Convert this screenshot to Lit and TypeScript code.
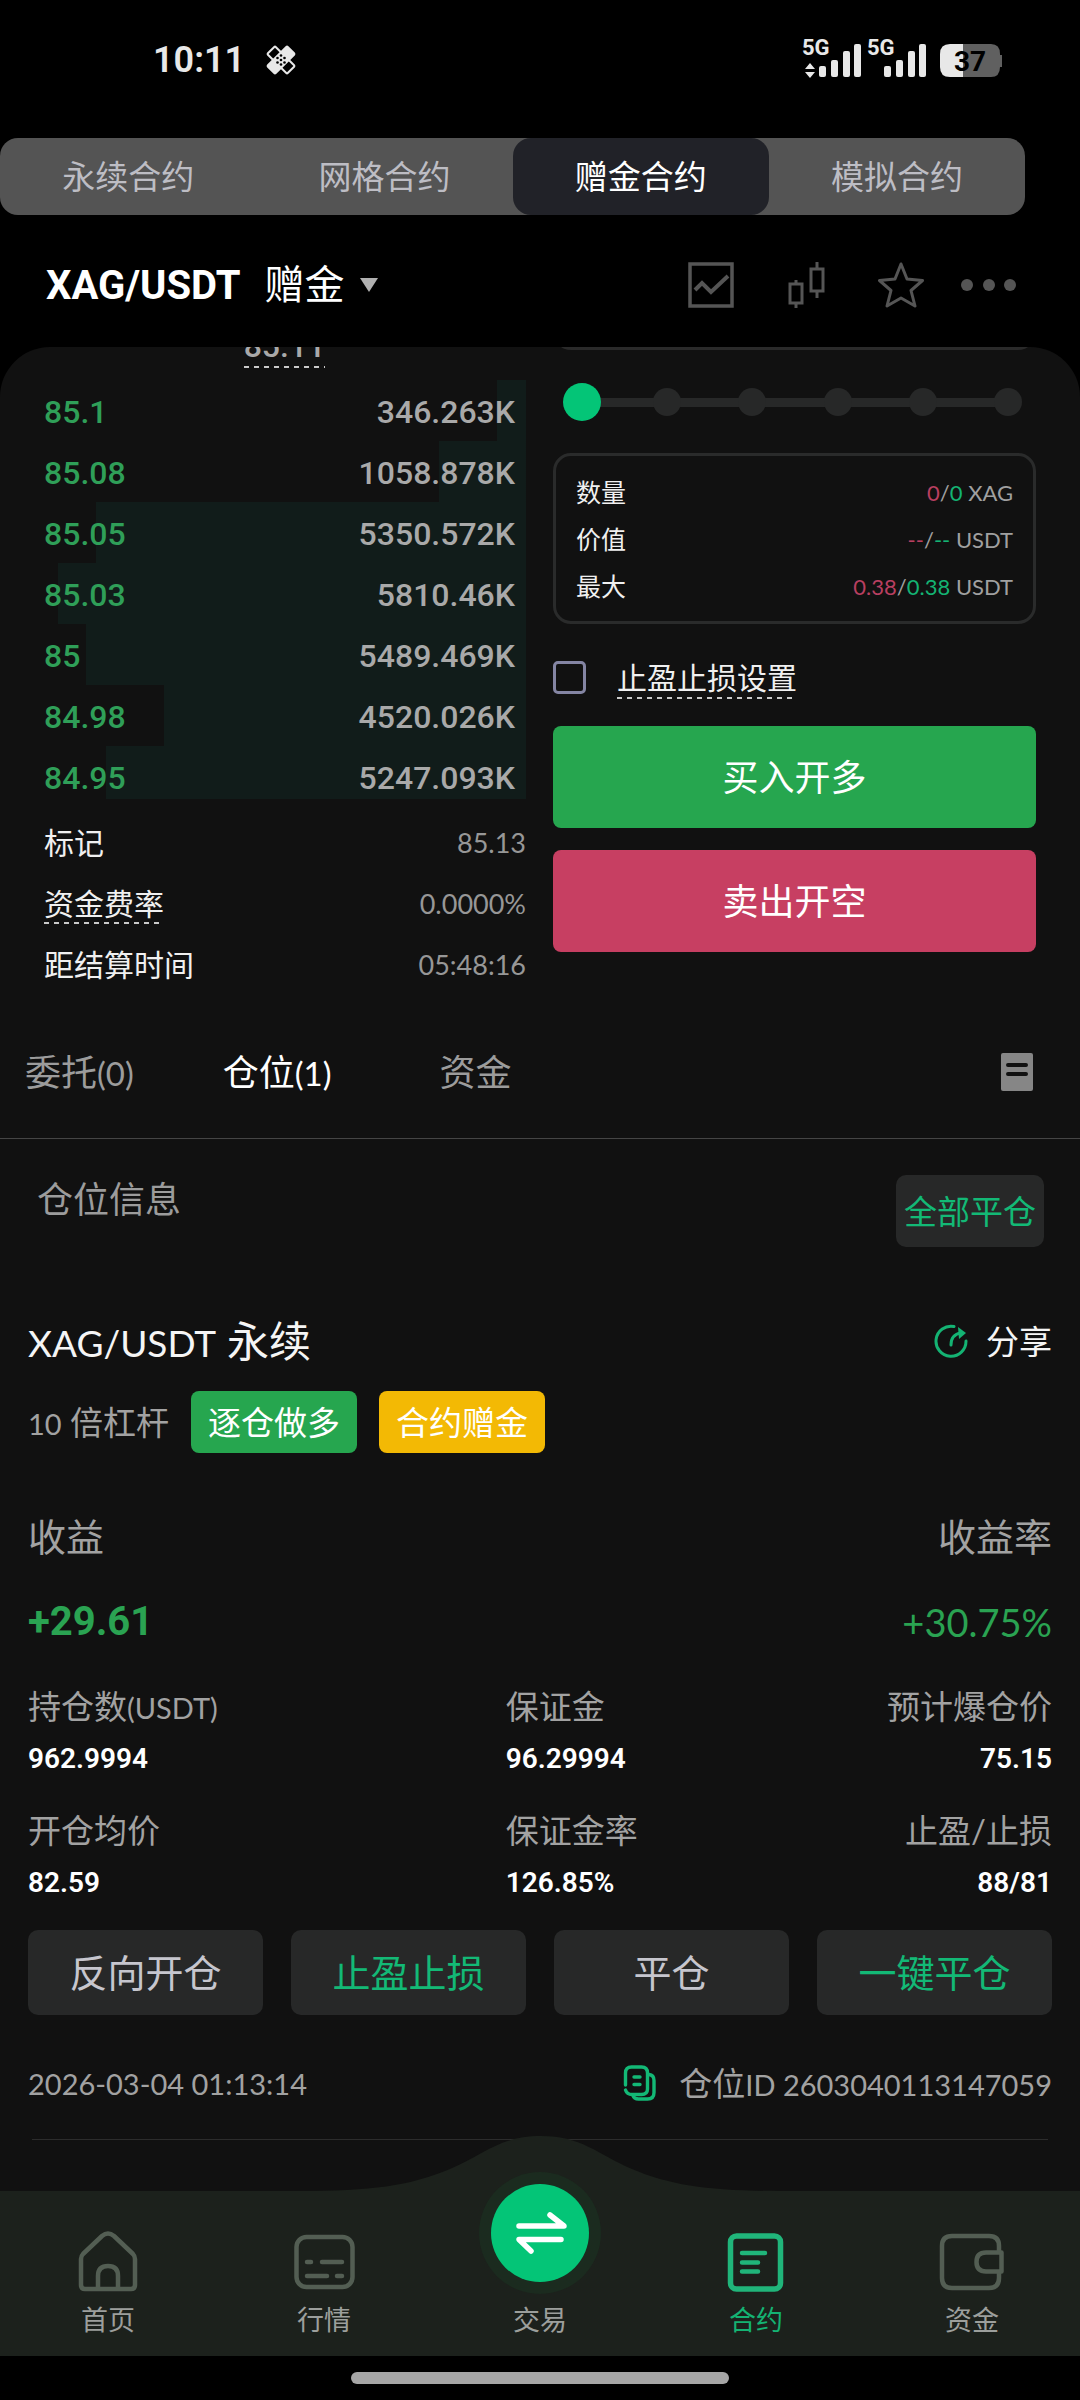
import { LitElement, html, css, svg } from "lit";
import { customElement, state } from "lit/decorators.js";
import { classMap } from "lit/directives/class-map.js";

const base = css`
  * {
    box-sizing: border-box;
  }
  button,
  input {
    font: inherit;
    color: inherit;
    margin: 0;
  }
  button {
    padding: 0;
    border: 0;
    background: none;
    cursor: pointer;
  }
  a {
    color: inherit;
    text-decoration: none;
  }
  svg {
    display: block;
    flex: none;
  }
  dl,
  dd,
  h1,
  h2,
  h3 {
    margin: 0;
    font-weight: 400;
  }
  .n {
    line-height: 1;
  }
  .dashed {
    background: repeating-linear-gradient(90deg, #c9c9c9 0 5px, transparent 5px 10px) bottom left / 100% 2px no-repeat;
  }
`;

@customElement("status-bar")
class StatusBar extends LitElement {
  static styles = [
    base,
    css`
      :host {
        display: flex;
        justify-content: space-between;
        align-items: center;
        height: 80px;
        padding: 0 78px 0 153px;
        color: #e8e8e8;
      }
      .left {
        display: flex;
        align-items: center;
        gap: 20px;
      }
      .time {
        font: 600 36px/48px Roboto, sans-serif;
      }
      .sys {
        display: flex;
        align-items: center;
      }
      text {
        font-family: Roboto, sans-serif;
        font-weight: 700;
      }
    `,
  ];
  render() {
    const bars = (x: number) => svg`
      <rect x=${x} y="27" width="7" height="11" rx="2" />
      <rect x=${x + 12} y="21" width="7" height="17" rx="2" />
      <rect x=${x + 24} y="12" width="7" height="26" rx="2" />
      <rect x=${x + 35} y="5" width="7" height="33" rx="2" />`;
    return html`
      <div class="left">
        <span class="time">10:11</span>
        <svg width="32" height="32" viewBox="0 0 32 32" aria-hidden="true">
          <g stroke="#e8e8e8" stroke-width="2">
            <rect x="10.500" y="2" width="11" height="28" rx="1" fill="none" transform="rotate(-45 16 16)" />
            <rect x="10.500" y="2" width="11" height="28" rx="1" fill="#e8e8e8" transform="rotate(45 16 16)" />
          </g>
          <g fill="#000">
            <circle cx="16" cy="11.500" r="1.300" /><circle cx="12.500" cy="14" r="1.300" /><circle cx="19.500" cy="14" r="1.300" />
            <circle cx="16" cy="16" r="1.300" /><circle cx="12.500" cy="18.500" r="1.300" /><circle cx="19.500" cy="18.500" r="1.300" />
            <circle cx="16" cy="20.500" r="1.300" />
          </g>
        </svg>
      </div>
      <div class="sys">
        <svg width="200" height="58" viewBox="0 -8 200 58" fill="#e8e8e8" role="img" aria-label="5G 5G 37%">
          <text x="0" y="16" font-size="22">5G</text>
          <path d="M8 24l5 6H3zM8 39l5-6H3z" />
          ${bars(17)}
          <text x="65" y="16" font-size="22">5G</text>
          ${bars(82)}
          <path fill="#606060" d="M148 5h41q9 0 9 10v1h3v12h-3q0 10-9 10h-41z" />
          <path d="M148 5h13v33h-13q-10 0-10-10V15q0-10 10-10z" />
          <text x="152" y="32" font-size="28" fill="#000">37</text>
        </svg>
      </div>
    `;
  }
}

const BIDS = [
  ["85.1", "346.263K", 6],
  ["85.08", "1058.878K", 18],
  ["85.05", "5350.572K", 89],
  ["85.03", "5810.46K", 97],
  ["85", "5489.469K", 91],
  ["84.98", "4520.026K", 75],
  ["84.95", "5247.093K", 87],
] as const;

@customElement("order-book")
class OrderBook extends LitElement {
  static styles = [
    base,
    css`
      :host {
        display: block;
      }
      .last {
        display: block;
        width: fit-content;
        margin: -20px auto 12px;
        padding-bottom: 2px;
        font: 500 32px/39px Roboto, sans-serif;
        color: #a9a9a9;
      }
      table {
        width: 100%;
        border-collapse: collapse;
        font: 500 32px/42px Roboto, sans-serif;
      }
      td {
        padding: 11px 11px 8px 1px;
        text-align: left;
        color: #2f9f58;
      }
      td + td {
        text-align: right;
        color: #a9a9a9;
      }
      tr:last-child td {
        padding-bottom: 0;
      }
      tr {
        background: linear-gradient(#111c1a, #111c1a) right / var(--depth) 100% no-repeat;
      }
      .stats {
        margin-top: 12px;
      }
      .row {
        display: flex;
        align-items: center;
        justify-content: space-between;
        height: 61px;
        padding-left: 1px;
      }
      .row dt {
        font-size: 30px;
        line-height: 42px;
        color: #f0f0f0;
      }
      .row dd {
        padding-top: 2px;
        font-size: 27px;
        line-height: 42px;
        color: #979797;
      }
    `,
  ];
  render() {
    return html`
      <button class="last dashed">85.11</button>
      <table>
        <tbody>
          ${BIDS.map(
            ([price, size, depth]) => html`<tr style="--depth:${depth}%">
              <td>${price}</td>
              <td>${size}</td>
            </tr>`
          )}
        </tbody>
      </table>
      <dl class="stats">
        <div class="row"><dt>标记</dt><dd>85.13</dd></div>
        <div class="row"><dt class="dashed">资金费率</dt><dd>0.0000%</dd></div>
        <div class="row"><dt>距结算时间</dt><dd>05:48:16</dd></div>
      </dl>
    `;
  }
}

@customElement("trade-form")
class TradeForm extends LitElement {
  static styles = [
    base,
    css`
      :host {
        display: block;
      }
      .amount {
        display: block;
        width: 100%;
        height: 80px;
        margin-top: -77px;
        border: 0;
        border-radius: 18px;
        background: #2a2a2a;
      }
      .slider {
        display: grid;
        align-items: center;
        margin: 33px 9px 32px 10px;
      }
      .ticks,
      .range {
        grid-area: 1 / 1;
      }
      .ticks {
        display: flex;
        justify-content: space-between;
        padding: 0 5px;
        background: linear-gradient(#272828, #272828) center / calc(100% - 38px) 9px no-repeat;
      }
      .tick {
        width: 28px;
        height: 28px;
        border-radius: 50%;
        background: #272828;
      }
      .range {
        appearance: none;
        width: 100%;
        height: 38px;
        background: none;
      }
      .range::-webkit-slider-thumb {
        appearance: none;
        width: 38px;
        height: 38px;
        border-radius: 50%;
        background: #04c577;
      }
      .card {
        padding: 13px 20px 11px;
        border: 3px solid #2a2b2b;
        border-radius: 18px;
      }
      .row {
        display: flex;
        align-items: center;
        justify-content: space-between;
        line-height: 47px;
      }
      .row dt {
        font-size: 25px;
        color: #f0f0f0;
      }
      .row dd {
        font-size: 22px;
        color: #a0a0a0;
      }
      .down {
        color: #b83f60;
      }
      .up {
        color: #14b373;
      }
      .tpsl {
        display: flex;
        align-items: center;
        gap: 31px;
        margin: 31px 0 27px;
      }
      .check {
        appearance: none;
        width: 33px;
        height: 33px;
        border: 3px solid #8485a3;
        border-radius: 5px;
      }
      .check:checked {
        background: #04c577;
      }
      .tpsl label {
        font-size: 30px;
        line-height: 44px;
        color: #f0f0f0;
      }
      .order {
        display: block;
        width: 100%;
        border-radius: 8px;
        font-size: 36px;
        line-height: 102px;
        color: #fff;
      }
      .buy {
        background: #26a64f;
      }
      .sell {
        margin-top: 22px;
        background: #c73f62;
      }
    `,
  ];
  render() {
    return html`
      <input class="amount" type="text" aria-label="数量" />
      <div class="slider">
        <div class="ticks">${[0, 1, 2, 3, 4, 5].map(() => html`<i class="tick"></i>`)}</div>
        <input class="range" type="range" min="0" max="100" step="20" value="0" aria-label="仓位比例" />
      </div>
      <dl class="card">
        <div class="row">
          <dt>数量</dt>
          <dd><span class="down">0</span>/<span class="up">0</span> XAG</dd>
        </div>
        <div class="row">
          <dt>价值</dt>
          <dd><span class="down">--</span>/<span class="up">--</span> USDT</dd>
        </div>
        <div class="row">
          <dt>最大</dt>
          <dd><span class="down">0.38</span>/<span class="up">0.38</span> USDT</dd>
        </div>
      </dl>
      <div class="tpsl">
        <input class="check" type="checkbox" id="tpsl" />
        <label class="dashed" for="tpsl">止盈止损设置</label>
      </div>
      <button class="order buy">买入开多</button>
      <button class="order sell">卖出开空</button>
    `;
  }
}

const FIELDS = [
  [html`持仓数<span class="n">(USDT)</span>`, "962.9994"],
  ["保证金", "96.29994"],
  ["预计爆仓价", "75.15"],
  ["开仓均价", "82.59"],
  ["保证金率", "126.85%"],
  ["止盈/止损", "88/81"],
] as const;

@customElement("position-card")
class PositionCard extends LitElement {
  static styles = [
    base,
    css`
      :host {
        display: block;
        padding: 64px 28px 0;
        font-size: 33px;
        color: #a2a2a2;
      }
      .line {
        display: flex;
        align-items: center;
        justify-content: space-between;
        line-height: 60px;
      }
      .name {
        font-size: 42px;
        color: #f5f5f5;
      }
      .name .n {
        font-size: 37px;
      }
      .share {
        display: flex;
        align-items: center;
        gap: 18px;
        line-height: 60px;
        color: #f5f5f5;
      }
      .tags {
        display: flex;
        align-items: center;
        gap: 22px;
        margin-top: 20px;
        line-height: 62px;
      }
      .tags .n,
      .fields .n,
      .foot .n {
        font-size: 29px;
      }
      .tag {
        padding: 0 17px;
        border-radius: 8px;
        color: #fff;
      }
      .long {
        background: #26a64f;
      }
      .bonus {
        background: #f3b904;
      }
      .heads {
        margin-top: 53px;
        font-size: 38px;
      }
      .gains {
        margin-top: 26px;
        color: #2aa352;
      }
      .gain {
        font: 700 40px/60px Roboto, sans-serif;
      }
      .rate {
        font-size: 38px;
      }
      .fields {
        display: grid;
        grid-template-columns: 7fr 4fr 4fr;
        row-gap: 27px;
        margin-top: 32px;
        line-height: 44px;
      }
      .field:nth-child(3n) {
        text-align: right;
      }
      .field dd {
        margin-top: 9px;
        font: 600 28px/44px Roboto, sans-serif;
        color: #fff;
      }
      .actions {
        display: grid;
        grid-template-columns: repeat(4, 1fr);
        gap: 28px;
        margin-top: 25px;
      }
      .action {
        border-radius: 10px;
        background: #272828;
        font-size: 38px;
        line-height: 85px;
        color: #c6c6ce;
      }
      .action:nth-child(even) {
        color: #13b976;
      }
      .foot {
        margin-top: 38px;
      }
      .id {
        display: flex;
        align-items: center;
        gap: 22px;
      }
      hr {
        margin: 26px 4px 0;
        border: 0;
        border-top: 1px solid #2c2c2c;
      }
    `,
  ];
  render() {
    return html`
      <div class="line">
        <h3 class="name"><span class="n">XAG/USDT</span> 永续</h3>
        <button class="share">
          <svg width="34" height="34" viewBox="0 0 34 34" fill="none" stroke="#14b373" stroke-width="3" aria-hidden="true">
            <path d="M20 2.500A15 15 0 1 0 32 17" stroke-linecap="round" />
            <path d="M17 21c0-7 3-11 10-12" stroke-linecap="round" />
            <path d="M24 3l8 6-7 6z" fill="#14b373" stroke="none" />
          </svg>
          分享
        </button>
      </div>
      <div class="tags">
        <span><span class="n">10</span> 倍杠杆</span>
        <span class="tag long">逐仓做多</span>
        <span class="tag bonus">合约赠金</span>
      </div>
      <div class="line heads"><span>收益</span><span>收益率</span></div>
      <div class="line gains"><span class="gain">+29.61</span><span class="rate">+30.75%</span></div>
      <dl class="fields">
        ${FIELDS.map(([label, value]) => html`<div class="field"><dt>${label}</dt><dd>${value}</dd></div>`)}
      </dl>
      <div class="actions">
        ${["反向开仓", "止盈止损", "平仓", "一键平仓"].map((t) => html`<button class="action">${t}</button>`)}
      </div>
      <div class="line foot">
        <span class="n">2026-03-04 01:13:14</span>
        <span class="id">
          <button aria-label="复制">
            <svg width="34" height="36" viewBox="0 0 34 36" fill="none" stroke="#13b976" stroke-width="3.400" stroke-linecap="round" aria-hidden="true">
              <path d="M2.500 20V8q0-6 6-6h10q6 0 6 6v16q0 5.500-6 5.500h-9.500q-5 0-6.500-4.500" />
              <path d="M26 9.500q5 .5 5 6v12q0 6.500-6.500 6.500h-9q-4.500 0-5.500-3.500" />
              <path d="M11 12h6M11 19.500h6" />
            </svg>
          </button>
          <span>仓位<span class="n">ID 2603040113147059</span></span>
        </span>
      </div>
      <hr />
    `;
  }
}

const NAV = [
  {
    label: "首页",
    icon: svg`<path d="M3 27q0-3 2-5L24 4q6-5 12 0l19 18q2 2 2 5v26q0 4-4 4H7q-4 0-4-4z" /><path d="M20 56V44q0-10 10-10t10 10v12" />`,
  },
  {
    label: "行情",
    icon: svg`<rect x="2.500" y="5" width="56" height="50" rx="10" /><path d="M13 30h4M28 30h20M13 44h20M43 44h5" stroke-linecap="round" />`,
  },
  { label: "交易", icon: null },
  {
    label: "合约",
    icon: svg`<rect x="4.500" y="4" width="50" height="53" rx="6" stroke-width="5.500" /><path d="M16 21h23M16 30.500h16M16 39.500h16" stroke-width="4.500" stroke-linecap="round" />`,
  },
  {
    label: "资金",
    icon: svg`<path d="M57 20v-6q0-10-10-10H10Q0 4 0 14v32q0 10 10 10h37q10 0 10-10v-6" /><path d="M59.500 20.500H44q-9.500 0-9.500 9.500t9.500 9.500h15.500z" />`,
  },
];

@customElement("bottom-nav")
class BottomNav extends LitElement {
  static styles = [
    base,
    css`
      :host {
        display: block;
        position: relative;
        background: #1c211c;
      }
      .hump {
        position: absolute;
        left: 50%;
        bottom: 100%;
        transform: translateX(-50%);
      }
      nav {
        position: relative;
        display: grid;
        grid-template-columns: repeat(5, 1fr);
        padding: 41px 0 16px;
      }
      .item {
        display: flex;
        flex-direction: column;
        align-items: center;
        gap: 8px;
        font-size: 27px;
        line-height: 40px;
        color: #9c9f9c;
        stroke: #535e53;
      }
      .on {
        color: #14b373;
        stroke: #20b57a;
      }
      .icon {
        overflow: visible;
      }
      .disc {
        margin-top: -60px;
        margin-bottom: -2px;
      }
    `,
  ];
  render() {
    return html`
      <svg class="hump" width="480" height="55" viewBox="0 0 480 55" aria-hidden="true">
        <path fill="#1c211c" d="M0 55C70 55 110 50 150 33C185 18 200 0 241 0S297 18 332 33C372 50 412 55 480 55z" />
      </svg>
      <nav>
        ${NAV.map(
          ({ label, icon }) => html`<a href="#" class=${classMap({ item: true, on: label === "合约" })}>
            ${icon
              ? html`<svg class="icon" width="60" height="60" viewBox="0 0 60 60" fill="none" stroke-width="4.500" stroke-linejoin="round" aria-hidden="true">${icon}</svg>`
              : html`<svg class="disc" width="122" height="122" viewBox="0 0 122 122" stroke="none" aria-hidden="true">
                  <circle cx="61" cy="61" r="61" fill="#1b2b1f" />
                  <circle cx="61" cy="61" r="49" fill="#04c577" />
                  <path d="M40 54h45L71 43M82 67.500H40L52 79" fill="none" stroke="#fff" stroke-width="5.500" stroke-linecap="round" stroke-linejoin="round" />
                </svg>`}
            <span>${label}</span>
          </a>`
        )}
      </nav>
    `;
  }
}

const MODES = ["永续合约", "网格合约", "赠金合约", "模拟合约"];

@customElement("app-root")
class AppRoot extends LitElement {
  @state() private mode = "赠金合约";

  static styles = [
    base,
    css`
      :host {
        box-sizing: border-box;
        display: flex;
        flex-direction: column;
        min-height: 100vh;
        padding-top: 20px;
        background: #000;
        color: #fff;
        font-family: Lato, "Noto Sans CJK SC", sans-serif;
      }
      .modes {
        display: grid;
        grid-template-columns: repeat(4, 1fr);
        margin: 38px 55px 0 0;
        border-radius: 18px;
        background: #545454;
      }
      .mode {
        border-radius: 18px;
        font-size: 33px;
        line-height: 77px;
        color: #bdbdc4;
      }
      .mode.on {
        background: #212228;
        color: #fff;
      }
      .header {
        display: flex;
        align-items: center;
        justify-content: space-between;
        height: 132px;
        padding: 7px 61px 0 46px;
      }
      .pair {
        display: flex;
        align-items: baseline;
        gap: 24px;
        font-size: 40px;
        line-height: 60px;
      }
      .pair b {
        font: 700 40px/60px Roboto, sans-serif;
      }
      .arrow {
        align-self: center;
        margin-left: -9px;
      }
      .tools {
        display: flex;
        align-items: center;
        gap: 47px;
      }
      .tools button:last-child {
        margin-left: -12px;
      }
      .panel {
        flex: 1;
        overflow: hidden;
        border-radius: 50px 50px 0 0;
        background: #111;
      }
      .trade {
        display: grid;
        grid-template-columns: 1fr 1fr;
        gap: 27px;
        padding: 0 44px 0 43px;
      }
      .tabs {
        display: flex;
        align-items: center;
        height: 145px;
        padding: 12px 47px 0 25px;
        border-bottom: 1px solid #454545;
        font-size: 36px;
        line-height: 60px;
        color: #9c9c9c;
      }
      .tabs .n {
        font-size: 33px;
      }
      .tabs button {
        margin-right: 89px;
        line-height: 60px;
      }
      .tabs button:nth-child(2) {
        margin-right: 108px;
        color: #fff;
      }
      .tabs button:last-child {
        margin: 0 0 0 auto;
      }
      .summary {
        display: flex;
        align-items: flex-start;
        justify-content: space-between;
        padding: 36px 36px 0 37px;
      }
      .summary h2 {
        font-size: 36px;
        line-height: 48px;
        color: #9c9c9c;
      }
      .close-all {
        padding: 0 8px;
        border-radius: 10px;
        background: #272828;
        font-size: 33px;
        line-height: 72px;
        color: #13b976;
      }
      .gesture {
        display: flex;
        justify-content: center;
        padding: 16px 0;
      }
      .gesture i {
        width: 35%;
        height: 12px;
        border-radius: 6px;
        background: #a6a6a6;
      }
    `,
  ];

  render() {
    return html`
      <status-bar></status-bar>
      <div class="modes">
        ${MODES.map(
          (m) => html`<button class=${classMap({ mode: true, on: m === this.mode })} @click=${() => (this.mode = m)}>${m}</button>`
        )}
      </div>
      <header class="header">
        <button class="pair">
          <b>XAG/USDT</b><span>赠金</span>
          <svg class="arrow" width="18" height="14" viewBox="0 0 18 14" aria-hidden="true"><path d="M0 0h18L9 14z" fill="#b0b0b0" /></svg>
        </button>
        <div class="tools">
          <button aria-label="走势">
            <svg width="46" height="46" viewBox="0 0 46 46" fill="none" stroke="#555" stroke-width="3.500" aria-hidden="true">
              <rect x="2" y="2" width="42" height="42" />
              <path d="M7 28l7-7 9 9L40 14" stroke-width="4" />
            </svg>
          </button>
          <button aria-label="K线">
            <svg width="50" height="46" viewBox="0 0 50 46" fill="none" stroke="#555" stroke-width="3" aria-hidden="true">
              <path d="M9 22h12v19H9zM15 18v4M15 41v5M30 7h12v22H30zM36 0v7M36 29v7" />
            </svg>
          </button>
          <button aria-label="收藏">
            <svg width="46" height="46" viewBox="0 0 46 46" fill="none" stroke="#555" stroke-width="3" stroke-linejoin="round" aria-hidden="true">
              <path d="M23 2l6 15 15.500 1.500L33 28.500 37 44 23 36 9 44l4-15.500L1.500 18.500 17 17z" />
            </svg>
          </button>
          <button aria-label="更多">
            <svg width="60" height="14" viewBox="0 0 60 14" fill="#555" aria-hidden="true">
              <circle cx="8" cy="7" r="6" /><circle cx="30" cy="7" r="6" /><circle cx="51" cy="7" r="6" />
            </svg>
          </button>
        </div>
      </header>
      <main class="panel">
        <section class="trade">
          <order-book></order-book>
          <trade-form></trade-form>
        </section>
        <div class="tabs">
          <button>委托<span class="n">(0)</span></button>
          <button>仓位<span class="n">(1)</span></button>
          <button>资金</button>
          <button aria-label="历史记录">
            <svg width="32" height="38" viewBox="0 0 32 38" aria-hidden="true">
              <rect width="32" height="38" rx="2" fill="#868686" />
              <path d="M7 12h18M7 21h18" stroke="#111" stroke-width="4" stroke-linecap="round" />
            </svg>
          </button>
        </div>
        <div class="summary">
          <h2>仓位信息</h2>
          <button class="close-all">全部平仓</button>
        </div>
        <position-card></position-card>
      </main>
      <bottom-nav></bottom-nav>
      <div class="gesture"><i></i></div>
    `;
  }
}
